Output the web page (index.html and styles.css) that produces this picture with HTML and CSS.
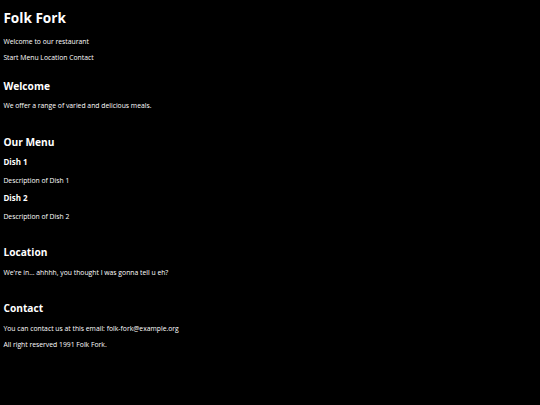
FILE: index.html
```html
<!DOCTYPE html>
<html lang="en">
<head>
<meta charset="utf-8">
<title>Folk Fork</title>
<link rel="stylesheet" href="styles.css">
</head>
<body>
<header class="site-header">
  <h1 class="title">Folk Fork</h1>
  <p class="text">Welcome to our restaurant</p>
  <nav class="nav"><p class="text"><a href="#start">Start</a> <a href="#menu">Menu</a> <a href="#location">Location</a> <a href="#contact">Contact</a></p></nav>
</header>
<main>
  <section class="section" id="start">
    <h2 class="heading">Welcome</h2>
    <p class="text">We offer a range of varied and delicious meals.</p>
  </section>
  <section class="section" id="menu">
    <h2 class="heading">Our Menu</h2>
    <h3 class="dish">Dish 1</h3>
    <p class="text">Description of Dish 1</p>
    <h3 class="dish">Dish 2</h3>
    <p class="text">Description of Dish 2</p>
  </section>
  <section class="section" id="location">
    <h2 class="heading">Location</h2>
    <p class="text">We're in... ahhhh, you thought I was gonna tell u eh?</p>
  </section>
  <section class="section" id="contact">
    <h2 class="heading">Contact</h2>
    <p class="text">You can contact us at this email: folk-fork@example.org</p>
  </section>
</main>
<footer class="footer">
  <p class="text">All right reserved 1991 Folk Fork.</p>
</footer>
</body>
</html>
```
FILE: styles.css
```css
html, body {
  background: #000;
}
body {
  margin: 3.4px;
  color: #fff;
  font-family: "Open Sans", "Noto Sans", sans-serif;
  font-size: 6.8px;
  line-height: 1.362;
}
.title {
  margin: 6px 0 9.1px;
  font-size: 2em;
  font-weight: 700;
}
.text {
  margin: 1em 0;
}
.nav a {
  color: #fff;
  text-decoration: none;
}
.section {
  margin-top: 17.5px;
}
.section + .section {
  margin-top: 25px;
}
.heading {
  margin: 0.75em 0;
  font-size: 1.5em;
  font-weight: 700;
}
.dish {
  margin: 1em 0;
  font-size: 1.17em;
  font-weight: 700;
}
```
